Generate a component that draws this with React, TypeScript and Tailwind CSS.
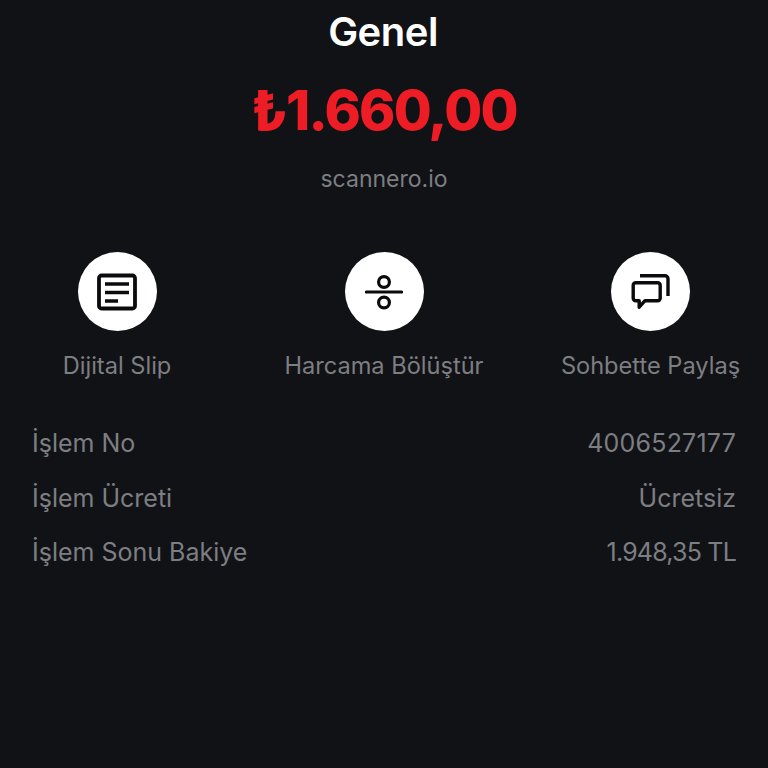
const font = { fontFamily: 'Inter, "Noto Sans", sans-serif' };

function SlipIcon() {
  return (
    <svg width="42" height="38" viewBox="0 0 42 38" fill="none" stroke="#0b0b0d">
      <rect x="3" y="2.5" width="36" height="33" rx="2.5" strokeWidth="3.8" />
      <path d="M9 11h24M9 19.5h24M9 28h13" strokeWidth="3.6" />
    </svg>
  );
}

function DivideIcon() {
  return (
    <svg width="38" height="36" viewBox="0 0 38 36" fill="none" stroke="#0b0b0d" strokeWidth="3.2">
      <circle cx="19" cy="8" r="5.4" />
      <path d="M1.5 18h35" strokeLinecap="round" />
      <circle cx="19" cy="28.5" r="5.4" />
    </svg>
  );
}

function ChatIcon() {
  return (
    <svg width="40" height="38" viewBox="0 0 40 38" fill="none" stroke="#0b0b0d" strokeWidth="3.4">
      <path d="M9 2.7h25a3 3 0 0 1 3 3V23" />
      <path d="M4.700 9.700h22a2.500 2.500 0 0 1 2.500 2.500v13a2.500 2.500 0 0 1-2.500 2.500H14l-5.800 6.500v-6.500h-3.500a2.500 2.500 0 0 1-2.500-2.500v-13a2.500 2.500 0 0 1 2.500-2.500z" strokeLinejoin="round" />
    </svg>
  );
}

const actions = [
  { label: 'Dijital Slip', icon: <SlipIcon />, width: 'w-[234px]' },
  { label: 'Harcama Bölüştür', icon: <DivideIcon />, width: 'w-[300px]' },
  { label: 'Sohbette Paylaş', icon: <ChatIcon />, width: 'w-[233px]' },
];

const rows = [
  { key: 'İşlem No', value: '4006527177', tracking: 'tracking-[0.2px]' },
  { key: 'İşlem Ücreti', value: 'Ücretsiz', tracking: '' },
  { key: 'İşlem Sonu Bakiye', value: '1.948,35 TL', tracking: 'tracking-[-0.8px]' },
];

export default function App() {
  return (
    <div style={font} className="h-[768px] w-[768px] overflow-hidden bg-[#111216]">
      <h1 className="pt-[10px] pr-[2px] text-center text-[40px] leading-[44px] font-semibold tracking-[-0.5px] text-white">Genel</h1>
      <p className="mt-[24px] text-center text-[55px] leading-[64px] font-extrabold tracking-[-1.8px] text-[#ee1c25]">₺1.660,00</p>
      <p className="mt-[23px] text-center text-[23px] leading-[28px] text-[#7d7e82]">scannero.io</p>

      <div className="mt-[59px] flex">
        {actions.map((a) => (
          <div key={a.label} className={`flex flex-col items-center ${a.width}`}>
            <div className="flex h-[79px] w-[79px] items-center justify-center rounded-full bg-white">{a.icon}</div>
            <span className="mt-[20px] text-[23.600px] leading-[30px] text-[#7d7e82]">{a.label}</span>
          </div>
        ))}
      </div>

      <div className="mt-[47px] flex flex-col gap-[24.5px] px-[32px]">
        {rows.map((row) => (
          <div key={row.key} className="flex justify-between text-[25px] leading-[30px] text-[#7d7e82]">
            <span>{row.key}</span>
            <span className={row.tracking}>{row.value}</span>
          </div>
        ))}
      </div>
    </div>
  );
}
